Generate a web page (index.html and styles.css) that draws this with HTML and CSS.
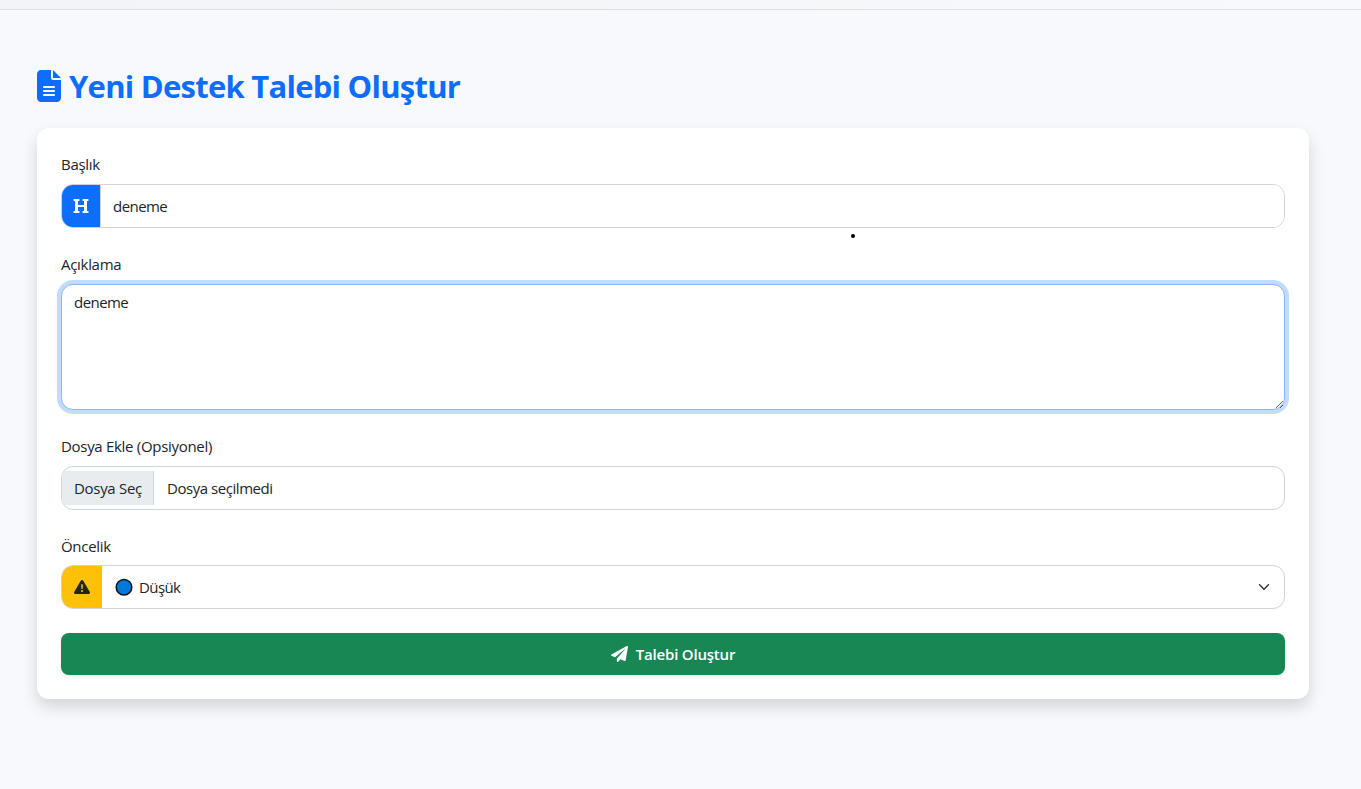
FILE: index.html
```html
<!DOCTYPE html>
<html lang="tr">
<head>
<meta charset="utf-8">
<title>Yeni Destek Talebi Oluştur</title>
<link rel="stylesheet" href="styles.css">
</head>
<body>
<header class="topbar"></header>
<main class="page">
  <h2 class="title">
    <svg class="title-icon" viewBox="0 0 384 512"><path d="M64 0C28.700 0 0 28.700 0 64V448c0 35.300 28.700 64 64 64H320c35.300 0 64-28.700 64-64V160H256c-17.700 0-32-14.300-32-32V0H64zM256 0V128H384L256 0zM112 256H272c8.800 0 16 7.200 16 16s-7.200 16-16 16H112c-8.800 0-16-7.200-16-16s7.200-16 16-16zm0 64H272c8.800 0 16 7.200 16 16s-7.200 16-16 16H112c-8.800 0-16-7.200-16-16s7.200-16 16-16zm0 64H272c8.800 0 16 7.200 16 16s-7.200 16-16 16H112c-8.800 0-16-7.200-16-16s7.200-16 16-16z"/></svg>
    <span>Yeni Destek Talebi Oluştur</span>
  </h2>
  <form class="card">
    <div class="field">
      <label class="label" for="subject">Başlık</label>
      <div class="control group">
        <span class="addon addon-blue"><svg width="16" height="16" viewBox="0 0 512 512"><path d="M448 96v320h32a16 16 0 0 1 16 16v32a16 16 0 0 1-16 16H320a16 16 0 0 1-16-16v-32a16 16 0 0 1 16-16h32V288H160v128h32a16 16 0 0 1 16 16v32a16 16 0 0 1-16 16H32a16 16 0 0 1-16-16v-32a16 16 0 0 1 16-16h32V96H32a16 16 0 0 1-16-16V48a16 16 0 0 1 16-16h160a16 16 0 0 1 16 16v32a16 16 0 0 1-16 16h-32v128h192V96h-32a16 16 0 0 1-16-16V48a16 16 0 0 1 16-16h160a16 16 0 0 1 16 16v32a16 16 0 0 1-16 16z"/></svg></span>
        <input class="input" id="subject" type="text" value="deneme">
      </div>
      <span class="dot"></span>
    </div>
    <div class="field">
      <label class="label" for="details">Açıklama</label>
      <textarea class="textarea" id="details">deneme</textarea>
    </div>
    <div class="field">
      <label class="label">Dosya Ekle (Opsiyonel)</label>
      <div class="control file">
        <span class="file-button">Dosya Seç</span>
        <span class="file-name">Dosya seçilmedi</span>
      </div>
    </div>
    <div class="field">
      <label class="label label-tight">Öncelik</label>
      <div class="control group">
        <span class="addon addon-yellow"><svg width="16" height="16" viewBox="0 0 512 512"><path d="M256 32c14.200 0 27.300 7.500 34.500 19.800l216 368c7.300 12.400 7.300 27.700 .2 40.100S486.300 480 472 480H40c-14.300 0-27.600-7.700-34.700-20.100s-7-27.800 .2-40.100l216-368C228.700 39.500 241.800 32 256 32zm0 128c-13.300 0-24 10.700-24 24V296c0 13.300 10.700 24 24 24s24-10.700 24-24V184c0-13.300-10.700-24-24-24zm32 224a32 32 0 1 0 -64 0 32 32 0 1 0 64 0z"/></svg></span>
        <span class="select">
          <svg class="level" width="18" height="18" viewBox="0 0 18 18"><circle cx="9" cy="9.300" r="7.800"/></svg>
          <span>Düşük</span>
          <svg class="chevron" width="16" height="12" viewBox="0 0 16 16"><path d="m2 5 6 6 6-6"/></svg>
        </span>
      </div>
    </div>
    <button class="submit" type="button">
      <svg width="17" height="16" viewBox="0 0 512 512" preserveAspectRatio="none"><path d="M476 3.200L12.500 270.600c-18.100 10.400-15.800 35.600 2.200 43.200L121 358.400l287.300-253.200c5.500-4.900 13.300 2.600 8.600 8.300L176 407v80.500c0 23.600 28.500 32.900 42.500 15.800L282 426l124.600 52.200c14.200 6 30.400-2.900 33-18.200l72-432C515 7.800 493.300-6.800 476 3.200z"/></svg>
      <span>Talebi Oluştur</span>
    </button>
  </form>
</main>
</body>
</html>
```
FILE: styles.css
```css
* { box-sizing: border-box; }
body {
  margin: 0;
  height: 789px;
  overflow: hidden;
  background: #f8f9fd;
  color: #212529;
  font: 400 15px/24px "Open Sans", "Noto Sans", sans-serif;
  letter-spacing: -0.3px;
}
svg { display: block; flex: none; fill: currentColor; }
.topbar {
  height: 10px;
  background: linear-gradient(90deg, #f3f4f6, #f8f9fa);
  border-bottom: 1px solid #dddfe3;
}
.page { width: 1272px; margin-left: 37px; padding-top: 57px; }
.title {
  display: flex;
  align-items: center;
  gap: 8px;
  height: 38px;
  margin: 0 0 23px;
  color: #0d6efd;
  font-size: 31px;
  font-weight: 700;
  letter-spacing: -0.75px;
}
.title-icon { width: 24px; height: 32px; }
.card {
  height: 571px;
  padding: 24px;
  border-radius: 12px;
  background: #fff;
  box-shadow: 0 8px 16px rgba(0, 0, 0, 0.15);
}
.field { position: relative; margin-bottom: 24px; }
.label { display: block; margin-bottom: 8px; }
.label-tight { margin-bottom: 7px; }
.control {
  display: flex;
  height: 44px;
  border: 1px solid #ced4da;
  border-radius: 12px;
  background: #fff;
  overflow: hidden;
}
.addon { display: flex; align-items: center; justify-content: center; }
.addon-blue { width: 39px; border-right: 1px solid #ced4da; background: #0d6efd; color: #fff; }
.addon-yellow { width: 40px; background: #ffc107; }
.input {
  flex: 1;
  border: 0;
  outline: 0;
  padding: 0 12px;
  font: inherit;
  color: inherit;
  letter-spacing: -0.55px;
}
.textarea {
  display: block;
  width: 100%;
  height: 126px;
  padding: 5px 12px;
  border: 1px solid #86b7fe;
  border-radius: 12px;
  outline: 0;
  box-shadow: 0 0 0 4px rgba(13, 110, 253, 0.25);
  font: inherit;
  color: inherit;
  letter-spacing: -0.55px;
  resize: vertical;
}
.dot {
  position: absolute;
  left: 790px;
  top: 82px;
  width: 4px;
  height: 4px;
  border-radius: 50%;
  background: #000;
}
.file { align-items: center; }
.file-button {
  width: 92px;
  height: 34px;
  padding: 5px 0 0 12px;
  border-right: 1px solid #ced4da;
  background: #e9ecef;
  white-space: nowrap;
}
.file-name { padding-left: 13px; letter-spacing: -0.45px; }
.select { display: flex; flex: 1; align-items: center; padding: 0 12px 0 13px; letter-spacing: -0.6px; }
.level { margin-right: 6px; fill: #0078d7; stroke: #111; stroke-width: 1.5; }
.chevron { margin-left: auto; fill: none; stroke: #343a40; stroke-width: 2; stroke-linecap: round; stroke-linejoin: round; }
.submit {
  display: flex;
  align-items: center;
  justify-content: center;
  gap: 8px;
  width: 100%;
  height: 42px;
  padding: 0;
  border: 0;
  border-radius: 8px;
  background: #198754;
  box-shadow: 0 2px 4px rgba(0, 0, 0, 0.075);
  color: #fff;
  font: inherit;
  font-weight: 600;
  letter-spacing: -0.2px;
}
```
